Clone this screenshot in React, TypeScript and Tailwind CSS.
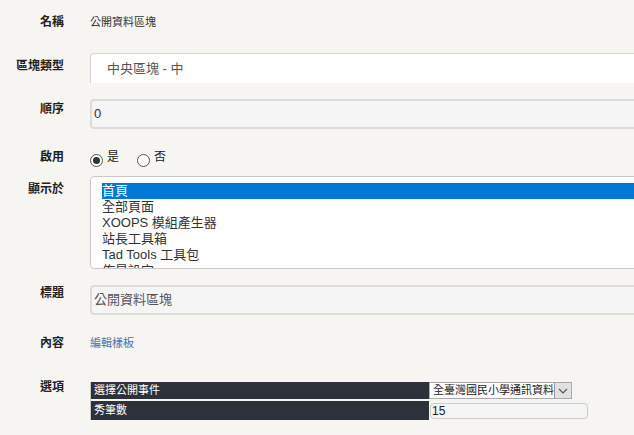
import React from 'react';

const font = "font-['Liberation_Sans','Noto_Sans_CJK_TC',sans-serif]";

function Label({ text, className = '' }: { text: string; className?: string }) {
  return (
    <div className={`w-[64px] shrink-0 text-right text-[12px] font-bold leading-4 text-[#222] ${className}`}>
      {text}
    </div>
  );
}

function Radio({ checked, label }: { checked: boolean; label: string }) {
  return (
    <div className="flex items-start">
      <span className="mt-[5px] flex h-[13px] w-[13px] items-center justify-center rounded-full border border-[#555] bg-white">
        {checked && <span className="h-[7px] w-[7px] rounded-full bg-[#333]" />}
      </span>
      <span className="ml-[4px] text-[12px] leading-4 text-[#222]">{label}</span>
    </div>
  );
}

const pages = ['首頁', '全部頁面', 'XOOPS 模組產生器', '站長工具箱', 'Tad Tools 工具包', '佈景設定'];

export default function App() {
  return (
    <div className={`h-[435px] w-[634px] overflow-hidden bg-[#f6f5f1] pt-[14px] ${font}`}>
      {/* 名稱 */}
      <div className="flex h-4">
        <Label text="名稱" />
        <div className="ml-[26px] text-[11px] leading-4 text-[#333]">公開資料區塊</div>
      </div>

      {/* 區塊類型 */}
      <div className="mt-[23px] flex">
        <Label text="區塊類型" className="pt-[5px]" />
        <div className="ml-[26px] flex h-[30px] w-[600px] shrink-0 items-center rounded-tl-[4px] border-l border-t border-[#d4d4d4] bg-white pl-[16px] text-[13px] text-[#555]">
          中央區塊 - 中
        </div>
      </div>

      {/* 順序 */}
      <div className="mt-[16px] flex">
        <Label text="順序" className="pt-[2px]" />
        <div className="ml-[26px] flex h-[30px] w-[600px] shrink-0 items-center rounded-[4px] border-2 border-[#dcdcdc] bg-[#f5f5f5] pl-[2px] text-[13px] text-[#333]">
          0
        </div>
      </div>

      {/* 啟用 */}
      <div className="mt-[20px] flex h-[18px]">
        <Label text="啟用" />
        <div className="ml-[26px] flex gap-[18px]">
          <Radio checked label="是" />
          <Radio checked={false} label="否" />
        </div>
      </div>

      {/* 顯示於 */}
      <div className="mt-[9px] flex">
        <Label text="顯示於" className="pt-[5px]" />
        <div className="ml-[26px] h-[93px] w-[600px] shrink-0 overflow-hidden rounded-l-[4px] border border-[#c8c8c8] bg-white pl-[11px] pt-[6px] text-[13px] leading-[16px] text-[#333]">
          {pages.map((p, i) => (
            <div key={p} className={i === 0 ? 'bg-[#0078d7] text-white' : ''}>
              {p}
            </div>
          ))}
        </div>
      </div>

      {/* 標題 */}
      <div className="mt-[16px] flex">
        <Label text="標題" />
        <div className="ml-[26px] flex h-[30px] w-[600px] shrink-0 items-center rounded-[4px] border-2 border-[#dcdcdc] bg-[#f5f5f5] pl-[2px] text-[13px] text-[#555]">
          公開資料區塊
        </div>
      </div>

      {/* 內容 */}
      <div className="mt-[20px] flex h-4">
        <Label text="內容" />
        <a className="ml-[26px] text-[11px] leading-4 text-[#4a72a8]">編輯樣板</a>
      </div>

      {/* 選項 */}
      <div className="mt-[28px] flex">
        <Label text="選項" />
        <div className="ml-[26px] mt-[3px] flex flex-col gap-[2px] border-l border-[#c8c8c8]">
          <div className="flex h-[17px]">
            <div className="w-[338px] bg-[#2d3139] pl-[3px] text-[11px] leading-[17px] text-white">選擇公開事件</div>
            <div className="flex w-[143px] border border-[#aaa] bg-white">
              <div className="flex-1 overflow-hidden whitespace-nowrap pl-[3px] text-[11px] leading-[15px] text-[#222]">
                全臺灣國民小學通訊資料
              </div>
              <div className="flex w-[17px] items-center justify-center border-l border-[#999] bg-[#e1e1e1]">
                <svg width="10" height="6" viewBox="0 0 10 6" fill="none">
                  <path d="M1 1l4 4 4-4" stroke="#555" strokeWidth="1.2" />
                </svg>
              </div>
            </div>
          </div>
          <div className="flex h-[19px]">
            <div className="w-[338px] bg-[#2d3139] pl-[3px] text-[11px] leading-[19px] text-white">秀筆數</div>
            <div className="flex items-center pl-[1px]">
              <div className="flex h-[16px] w-[158px] items-center rounded-[4px] border border-[#ccc] bg-[#f5f5f5] pl-[1px] text-[12px] text-[#222]">
                15
              </div>
            </div>
          </div>
        </div>
      </div>
    </div>
  );
}
